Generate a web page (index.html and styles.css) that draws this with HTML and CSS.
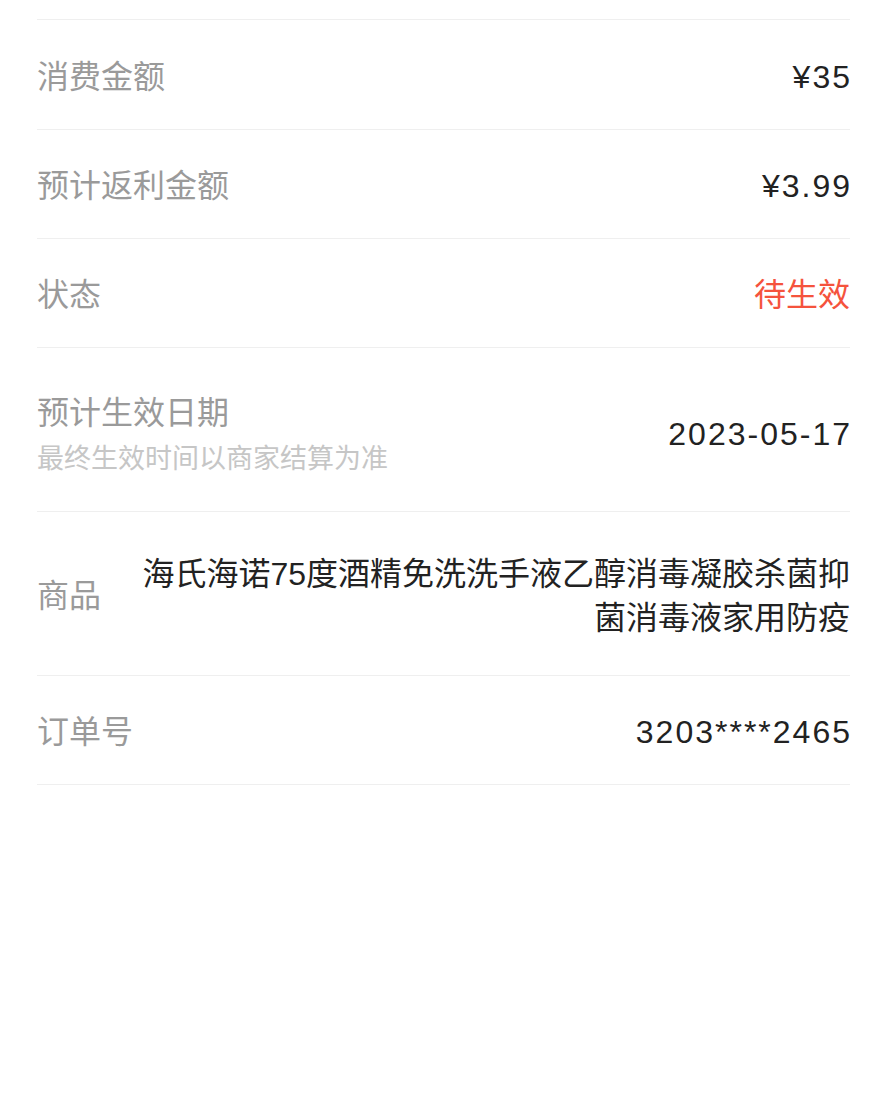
FILE: index.html
```
<!DOCTYPE html>
<html lang="zh-CN">

<head>
    <meta charset="UTF-8">
    <meta name="viewport" content="width=device-width, initial-scale=1.0">
    <title>订单详情</title>
    <link rel="stylesheet" href="styles.css">
</head>

<body>
    <div class="detail">
        <div class="row">
            <span class="label">消费金额</span>
            <span class="value num">¥35</span>
        </div>
        <div class="row">
            <span class="label">预计返利金额</span>
            <span class="value num">¥3.99</span>
        </div>
        <div class="row">
            <span class="label">状态</span>
            <span class="value red">待生效</span>
        </div>
        <div class="row date">
            <div class="label">
                <div class="main">预计生效日期</div>
                <div class="sub">最终生效时间以商家结算为准</div>
            </div>
            <span class="value num">2023-05-17</span>
        </div>
        <div class="row goods">
            <span class="label">商品</span>
            <span class="value">海氏海诺75度酒精免洗洗手液乙醇消毒凝胶杀菌抑菌消毒液家用防疫</span>
        </div>
        <div class="row">
            <span class="label">订单号</span>
            <span class="value num">3203****2465</span>
        </div>
    </div>
</body>

</html>
```

FILE: styles.css
```
body {
    margin: 0;
    background: #fff;
    font-family: "Liberation Sans", "Noto Sans CJK SC", sans-serif;
}

.detail {
    margin: 19px 37px 0 37px;
    border-top: 1px solid #efefef;
}

.detail .row {
    display: flex;
    align-items: center;
    justify-content: space-between;
    padding: 40px 0 36px;
    border-bottom: 1px solid #efefef;
    font-size: 32px;
    line-height: 32px;
}

.detail .row:first-child {
    padding-top: 41px;
}

.detail .label {
    flex-shrink: 0;
    color: #9a9a9a;
}

.detail .value {
    color: #222;
    text-align: right;
}

.detail .value.num {
    letter-spacing: 2px;
    margin-right: -2px;
}

.detail .value.red {
    color: #f5533d;
}

.detail .date {
    padding: 43px 0 35px;
}

.detail .date .main {
    line-height: 44px;
}

.detail .date .sub {
    margin-top: 7px;
    font-size: 27px;
    line-height: 34px;
    color: #c6c6c6;
}

.detail .goods {
    padding: 40px 0 35px;
}

.detail .goods .value {
    margin-left: 36px;
    line-height: 44px;
}
```
